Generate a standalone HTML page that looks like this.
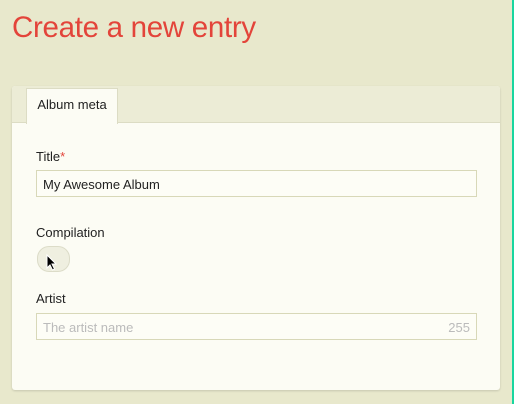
<!DOCTYPE html>
<html><head><style>
body{margin:0;width:514px;height:404px;background:#e8e8cc;font-family:"Liberation Sans",sans-serif;position:relative;overflow:hidden}
h1{position:absolute;left:12px;top:11px;margin:0;font-weight:normal;font-size:29.5px;color:#e3443a;letter-spacing:-0.3px}
.card{position:absolute;left:12px;top:86px;width:488px;height:304px;background:#fcfcf4;border-radius:3px;box-shadow:0 1px 2px rgba(0,0,0,.15)}
.head{position:absolute;left:0;top:0;width:488px;height:36px;background:#ececd6;border-bottom:1px solid #dcdcc4;border-radius:3px 3px 0 0}
.tab{position:absolute;left:14px;top:2px;width:90px;height:35px;background:#fcfcf4;border:1px solid #dcdcc4;border-bottom:none;font-size:13px;color:#222;line-height:32px;text-align:center}
.lbl{position:absolute;left:24px;font-size:13px;color:#222}
.inp{position:absolute;left:24px;height:27px;border:1px solid #d8d8b8;background:#fdfdf6;font-size:13px;line-height:27px;padding-left:6px;box-sizing:border-box;width:441px}
.tog{position:absolute;left:37px;top:246px;width:31px;height:24px;border-radius:12px;background:#efefe0;border:1px solid #dcdcc8}
.green{position:absolute;right:0;top:0;width:2px;height:404px;background:#19d6a0}
</style></head><body>
<h1>Create a new entry</h1>
<div class="card">
<div class="head"></div>
<div class="tab">Album meta</div>
<div class="lbl" style="top:63px">Title<span style="color:#e3443a">*</span></div>
<div class="inp" style="top:84px;color:#222">My Awesome Album</div>
<div class="lbl" style="top:139px">Compilation</div>
<div class="lbl" style="top:205px">Artist</div>
<div class="inp" style="top:227px;color:#bbb">The artist name<span style="float:right;padding-right:6px">255</span></div>
</div>
<div class="tog"></div>
<svg style="position:absolute;left:46px;top:254px" width="12" height="18" viewBox="0 0 12 18"><path d="M1 1 L1 14 L4 11 L6.5 16 L8.5 15 L6 10 L10 10 Z" fill="#000" stroke="#fff" stroke-width="1"/></svg>
<div class="green"></div>
</body></html>
